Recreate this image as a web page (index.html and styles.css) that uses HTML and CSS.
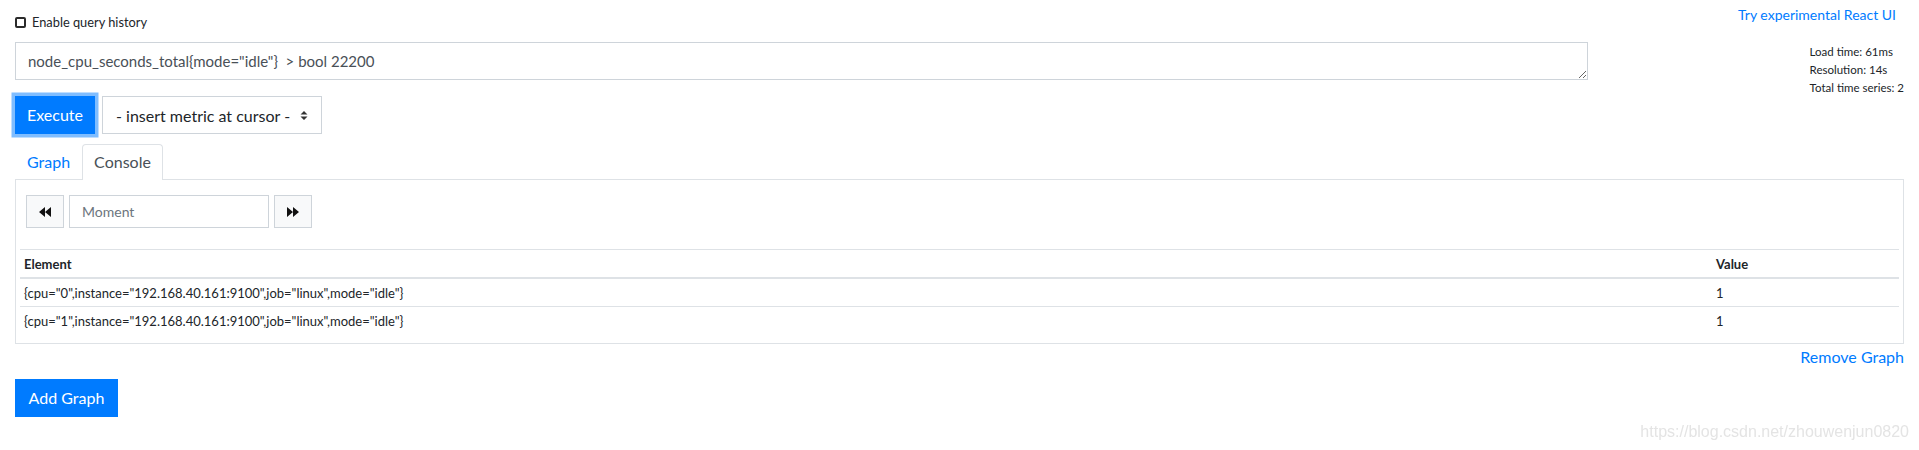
FILE: index.html
```html
<!DOCTYPE html>
<html lang="en">
<head>
<meta charset="utf-8">
<title>Prometheus Time Series Collection and Processing Server</title>
<link rel="stylesheet" href="styles.css">
</head>
<body>
<div class="page">
  <div class="topbar">
    <label class="history"><input type="checkbox" class="history-check">Enable query history</label>
    <a class="react-link" href="#">Try experimental React UI</a>
  </div>

  <div class="query">
    <textarea class="expr" rows="1">node_cpu_seconds_total{mode="idle"}  &gt; bool 22200</textarea>
    <div class="info">
      <div>Load time: 61ms</div>
      <div>Resolution: 14s</div>
      <div>Total time series: 2</div>
    </div>
    <div class="exec-row">
      <button class="btn btn-exec">Execute</button>
      <div class="metric-select">
        <span>- insert metric at cursor -</span>
        <svg class="select-arrows" width="8" height="9" viewBox="0 0 8 9"><path d="M0.5 3.5 L4 0 L7.5 3.5 Z M0.5 5.5 L7.5 5.5 L4 9 Z" fill="#333"/></svg>
      </div>
    </div>
  </div>

  <div class="tabs">
    <a class="tab" href="#">Graph</a>
    <a class="tab active" href="#">Console</a>
  </div>

  <div class="panel">
    <div class="moment">
      <button class="btn btn-light btn-nav">
        <svg width="12" height="10" viewBox="0 0 12 10"><path d="M0 5 L6 0 L6 10 Z M6 5 L12 0 L12 10 Z" fill="#111"/></svg>
      </button>
      <input class="moment-input" type="text" placeholder="Moment">
      <button class="btn btn-light btn-nav">
        <svg width="12" height="10" viewBox="0 0 12 10"><path d="M0 0 L6 5 L0 10 Z M6 0 L12 5 L6 10 Z" fill="#111"/></svg>
      </button>
    </div>

    <table class="results">
      <colgroup><col><col class="value-col"></colgroup>
      <thead>
        <tr><th>Element</th><th>Value</th></tr>
      </thead>
      <tbody>
        <tr><td>{cpu="0",instance="192.168.40.161:9100",job="linux",mode="idle"}</td><td>1</td></tr>
        <tr><td>{cpu="1",instance="192.168.40.161:9100",job="linux",mode="idle"}</td><td>1</td></tr>
      </tbody>
    </table>
  </div>

  <div class="remove-row"><a href="#" class="remove-link">Remove Graph</a></div>

  <button class="btn btn-add">Add Graph</button>
</div>
<div class="watermark">https://blog.csdn.net/zhouwenjun0820</div>
</body>
</html>
```

FILE: styles.css
```css
* {
  box-sizing: border-box;
}

html, body {
  margin: 0;
  background: #fff;
}

body {
  font-family: Lato, "Open Sans", sans-serif;
  color: #212529;
  font-size: 16px;
}

a {
  color: #007bff;
  text-decoration: none;
}

.page {
  padding: 0 15px;
}

/* top bar */
.topbar {
  display: flex;
  justify-content: space-between;
  align-items: flex-start;
  height: 42px;
}

.history {
  display: flex;
  align-items: center;
  margin-top: 13px;
  font-size: 12.8px;
  line-height: 18px;
}

.history-check {
  appearance: none;
  -webkit-appearance: none;
  width: 11px;
  height: 11px;
  border: 2px solid #2b2b2b;
  border-radius: 2px;
  margin: 0 6px 0 0;
  background: #fff;
}

.react-link {
  font-size: 14px;
  line-height: 18px;
  margin-top: 6px;
  margin-right: 8px;
}

/* query area */
.query {
  display: grid;
  grid-template-columns: 1573px 1fr;
  row-gap: 16px;
}

.expr {
  grid-column: 1;
  grid-row: 1;
  display: block;
  width: 100%;
  height: 38px;
  margin: 0;
  padding: 6px 12px;
  border: 1px solid #ced4da;
  border-radius: 0;
  font-family: Lato, "Open Sans", sans-serif;
  font-size: 15px;
  line-height: 24px;
  color: #495057;
  resize: both;
  overflow: hidden;
  outline: none;
}

.info {
  grid-column: 2;
  grid-row: 1 / span 2;
  justify-self: end;
  align-self: start;
  margin-top: 1px;
  font-size: 11.5px;
  line-height: 18px;
  color: #212529;
}

.exec-row {
  grid-column: 1;
  grid-row: 2;
  display: flex;
  gap: 7px;
}

.btn {
  font-family: Lato, "Open Sans", sans-serif;
  font-size: 16px;
  line-height: 24px;
  border-radius: 0;
  cursor: pointer;
  margin: 0;
}

.btn-exec {
  width: 80px;
  height: 38px;
  padding: 0;
  background: #007bff;
  border: 1px solid #007bff;
  color: #fff;
  box-shadow: 0 0 0 3.5px rgba(0, 123, 255, 0.5);
}

.metric-select {
  width: 220px;
  height: 38px;
  border: 1px solid #ced4da;
  display: flex;
  align-items: center;
  justify-content: space-between;
  padding: 0 13px 0 13px;
  font-size: 16px;
  color: #212529;
}

.select-arrows {
  display: block;
}

/* tabs */
.tabs {
  display: flex;
  margin-top: 10px;
}

.tab {
  display: block;
  padding: 5px 11px 6px;
  border: 1px solid transparent;
  border-bottom: 0;
  border-radius: 4px 4px 0 0;
  margin-bottom: -1px;
  font-size: 16px;
  line-height: 24px;
  color: #007bff;
}

.tab.active {
  position: relative;
  z-index: 1;
  background: #fff;
  border-color: #dee2e6;
  color: #495057;
}

/* panel */
.panel {
  border: 1px solid #dee2e6;
  padding: 15px 4px 9px;
}

.moment {
  display: flex;
  gap: 5px;
  margin: 0 6px;
}

.btn-light {
  background: #f8f9fa;
  border: 1px solid #ced4da;
}

.btn-nav {
  width: 38px;
  height: 33px;
  padding: 0;
  display: flex;
  align-items: center;
  justify-content: center;
}

.btn-nav svg {
  display: block;
}

.moment-input {
  width: 200px;
  height: 33px;
  margin: 0;
  padding: 0 12px;
  border: 1px solid #ced4da;
  border-radius: 0;
  font-family: Lato, "Open Sans", sans-serif;
  font-size: 14px;
  color: #495057;
  outline: none;
}

.moment-input::placeholder {
  color: #6c757d;
}

.results {
  width: 100%;
  margin-top: 21px;
  border-collapse: separate;
  border-spacing: 0;
  font-size: 13px;
  line-height: 18px;
}

.value-col {
  width: 187px;
}

.results th,
.results td {
  padding: 5px 4px 4px;
  text-align: left;
  vertical-align: top;
}

.results th {
  font-weight: 700;
  border-top: 1px solid #dee2e6;
  border-bottom: 2px solid #dee2e6;
}

.results tbody tr + tr td {
  border-top: 1px solid #dee2e6;
}

/* below panel */
.remove-row {
  text-align: right;
  margin-top: 1px;
  font-size: 16px;
  line-height: 24px;
}

.btn-add {
  display: block;
  margin-top: 10px;
  width: 103px;
  height: 38px;
  padding: 0;
  background: #007bff;
  border: 1px solid #007bff;
  color: #fff;
}

.watermark {
  position: fixed;
  right: 10px;
  bottom: 9px;
  font-family: "Liberation Sans", Arial, sans-serif;
  font-size: 16px;
  line-height: 18px;
  color: #e4e4e4;
}
```
